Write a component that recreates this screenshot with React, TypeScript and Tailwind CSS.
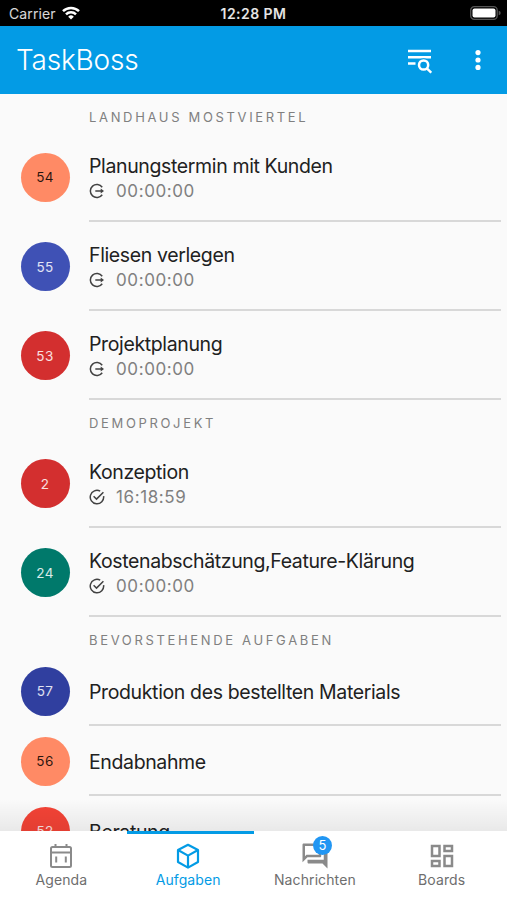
import { MdOutlineDashboard, MdOutlineForum } from 'react-icons/md'

type Task = {
  id: number
  title: string
  color: string
  time?: string
  done?: boolean
}

const sections: { name: string; tasks: Task[] }[] = [
  {
    name: 'Landhaus Mostviertel',
    tasks: [
      { id: 54, title: 'Planungstermin mit Kunden', color: 'bg-[#ff8a65] text-black/85', time: '00:00:00' },
      { id: 55, title: 'Fliesen verlegen', color: 'bg-[#3f51b5] text-white/85', time: '00:00:00' },
      { id: 53, title: 'Projektplanung', color: 'bg-[#d32f2f] text-white/85', time: '00:00:00' },
    ],
  },
  {
    name: 'Demoprojekt',
    tasks: [
      { id: 2, title: 'Konzeption', color: 'bg-[#d32f2f] text-white/85', time: '16:18:59', done: true },
      { id: 24, title: 'Kostenabschätzung,Feature-Klärung', color: 'bg-[#00796b] text-white/85', time: '00:00:00', done: true },
    ],
  },
  {
    name: 'Bevorstehende Aufgaben',
    tasks: [
      { id: 57, title: 'Produktion des bestellten Materials', color: 'bg-[#303f9f] text-white/85' },
      { id: 56, title: 'Endabnahme', color: 'bg-[#ff8a65] text-black/85' },
      { id: 52, title: 'Beratung', color: 'bg-[#f44336] text-white/85' },
    ],
  },
]

function StatusBar() {
  return (
    <div className="relative flex h-[25.5px] shrink-0 items-center justify-between bg-black pt-[1px] pr-[6px] pl-[9px] text-[14px] text-white">
      <div className="flex items-center gap-[6px] text-white/85">
        <span className="tracking-[0.1px]">Carrier</span>
        <svg viewBox="0 0 18 14" className="h-[14px] w-[18px]" fill="none" stroke="white" strokeWidth="2.5">
          <path d="M1 5.2a11.4 11.4 0 0 1 16 0" />
          <path d="M4 8.4a7.1 7.1 0 0 1 10 0" />
          <path d="M9 13.5 6.2 10.7a4 4 0 0 1 5.6 0Z" fill="white" stroke="none" />
        </svg>
      </div>
      <span className="absolute left-1/2 -translate-x-1/2 text-[14px] font-semibold tracking-[0.45px] whitespace-nowrap text-white/90">
        12:28 PM
      </span>
      <svg viewBox="0 0 31 14" className="h-[14px] w-[31px]">
        <rect x="0.7" y="0.7" width="26.5" height="12.6" rx="3.6" fill="none" stroke="#555" strokeWidth="1.3" />
        <rect x="2.5" y="2.5" width="23" height="9" rx="2" fill="white" />
        <path d="M28.7 4.8q2 .5 2 2.2t-2 2.2Z" fill="#555" />
      </svg>
    </div>
  )
}

function Header() {
  return (
    <header className="flex h-[68.5px] shrink-0 items-center justify-between bg-[#039be5] pr-[26.5px] pl-[16px] text-white">
      <h1 className="text-[28px] font-light tracking-[-0.2px]">TaskBoss</h1>
      <div className="flex items-center gap-[43px]">
        <svg viewBox="0 0 24 25" className="mt-[3px] h-[25px] w-[24px]" fill="none" stroke="white" strokeWidth="2.5">
          <path d="M0 2h23M0 8.2h23M0 14.4h7.5" />
          <circle cx="15.6" cy="16" r="6.8" fill="#039be5" stroke="none" />
          <circle cx="15.6" cy="16" r="4.6" />
          <path d="m18.9 19.3 4.4 4.4" />
        </svg>
        <svg viewBox="0 0 6 20" className="h-[20px] w-[6px]" fill="white">
          <circle cx="3" cy="2.6" r="2.6" />
          <circle cx="3" cy="10" r="2.6" />
          <circle cx="3" cy="17.4" r="2.6" />
        </svg>
      </div>
    </header>
  )
}

function StateIcon({ done }: { done?: boolean }) {
  return (
    <svg viewBox="0 0 16 16" className="h-[16px] w-[16px]" fill="none" stroke="#424242" strokeWidth="1.5">
      {done ? (
        <>
          <path d="M14.6 7.2A6.7 6.7 0 1 1 11.2 2.2" />
          <path d="m4.6 7.3 2.9 2.8 6.9-6.9" />
        </>
      ) : (
        <>
          <path d="M13.2 4.3a6.5 6.5 0 1 0 0 7.4" />
          <path d="M6.3 8h6.2" />
          <path d="m11.7 5.6 3.3 2.4-3.3 2.4Z" fill="#424242" stroke="none" />
        </>
      )}
    </svg>
  )
}

function TaskRow({ task }: { task: Task }) {
  return (
    <li className={task.time ? 'flex h-[89.1px] items-center pl-[20.5px]' : 'flex h-[70px] items-center pl-[20.5px]'}>
      <div className={`flex h-[49px] w-[49px] shrink-0 items-center justify-center rounded-full text-[13.5px] tracking-[0.4px] ${task.color}`}>
        {task.id}
      </div>
      <div className="mr-[6px] ml-[19.5px] flex h-full flex-1 flex-col justify-center border-b-2 border-[#d8d8d8] pt-[3px]">
        <p className="text-[19.5px] leading-[26px] tracking-[-0.37px] whitespace-nowrap text-[#212121]">{task.title}</p>
        {task.time && (
          <div className="flex items-center gap-[11px] text-[17px] leading-[25px] tracking-[0.6px] text-[#808080]">
            <StateIcon done={task.done} />
            {task.time}
          </div>
        )}
      </div>
    </li>
  )
}

function CalendarIcon() {
  return (
    <svg viewBox="0 0 24 26" className="h-[26px] w-[24px] text-[#8a8a8a]" fill="none" stroke="currentColor" strokeWidth="2">
      <rect x="2" y="4" width="20" height="20" rx="1.5" />
      <path d="M2 9.5h20M6.5 1v3M17.5 1v3" />
      <path d="M7.2 13.5v6M16.8 13.5v6" />
    </svg>
  )
}

function CubeIcon() {
  return (
    <svg viewBox="0 0 24 26" className="h-[26px] w-[24px]" fill="none" stroke="currentColor" strokeWidth="2.2" strokeLinejoin="round">
      <path d="M12 1.8 22 7v12l-10 5.6L2 19V7Z" />
      <path d="m2 7 10 5.6L22 7M12 12.6v12" />
    </svg>
  )
}

function BottomNav() {
  const item = 'relative flex flex-1 flex-col items-center border-t-[3px] pt-[9px] pr-[4px] text-[14px] tracking-[0.1px]'
  return (
    <nav className="relative flex h-[69px] shrink-0 bg-white text-[#6e6e6e]">
      <div className="pointer-events-none absolute inset-x-0 bottom-full h-[32px] bg-linear-to-b from-transparent to-black/7" />
      <a className={`${item} border-transparent`}>
        <CalendarIcon />
        <span>Agenda</span>
      </a>
      <a className={`${item} border-[#039be5] text-[#039be5]`}>
        <CubeIcon />
        <span>Aufgaben</span>
      </a>
      <a className={`${item} border-transparent`}>
        <MdOutlineForum className="-my-[2px] h-[30px] w-[30px] text-[#8a8a8a]" />
        <span>Nachrichten</span>
        <span className="absolute top-[2px] left-[59.5px] flex h-[19px] w-[19px] items-center justify-center rounded-full bg-[#2196f3] text-[13px] text-white">
          5
        </span>
      </a>
      <a className={`${item} border-transparent`}>
        <MdOutlineDashboard className="-my-[2px] h-[30px] w-[30px] text-[#8a8a8a]" />
        <span>Boards</span>
      </a>
    </nav>
  )
}

export default function App() {
  return (
    <div className="flex h-[900px] w-[507px] flex-col overflow-hidden bg-[#fafafa] font-['Inter',sans-serif]">
      <StatusBar />
      <Header />
      <main className="min-h-0 flex-1 overflow-hidden">
        {sections.map((section) => (
          <section key={section.name}>
            <h2 className="h-[39px] pt-[12.5px] pl-[89px] text-[13px] leading-[20px] tracking-[2.66px] text-[#808080] uppercase">
              {section.name}
            </h2>
            <ul>
              {section.tasks.map((task) => (
                <TaskRow key={task.id} task={task} />
              ))}
            </ul>
          </section>
        ))}
      </main>
      <BottomNav />
    </div>
  )
}
